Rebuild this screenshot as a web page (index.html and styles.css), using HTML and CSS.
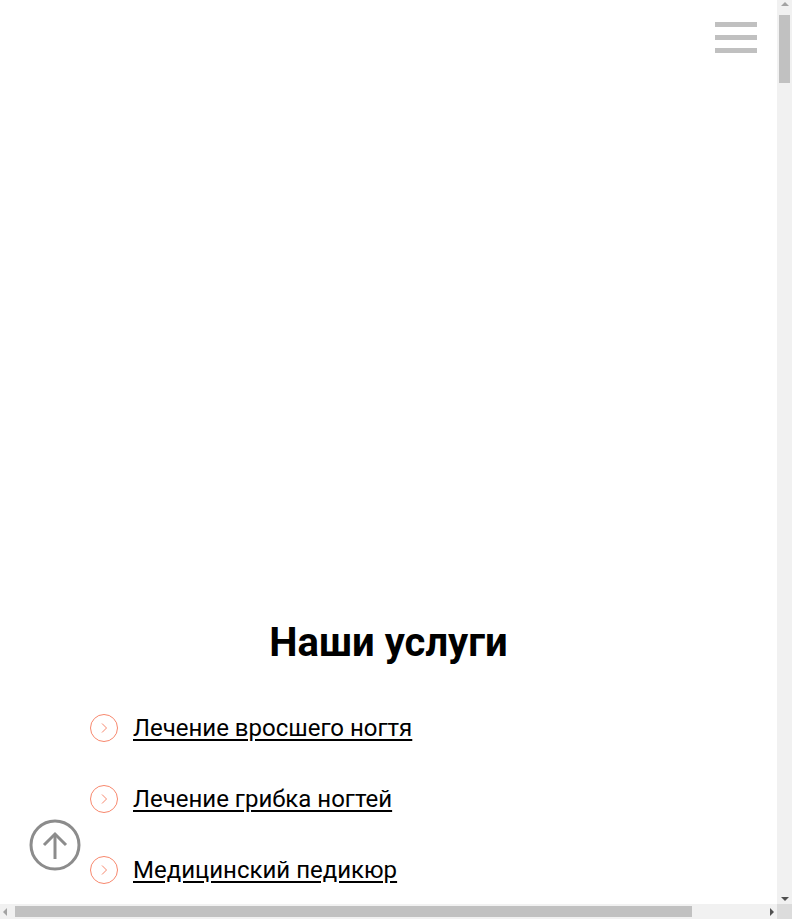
FILE: index.html
```html
<!DOCTYPE html>
<html lang="ru">

<head>
    <meta charset="utf-8">
    <title>Наши услуги</title>

    <link rel="stylesheet" href="styles.css">

</head>

<body>

    <div class="page">

        <header class="header">
            <button class="burger" aria-label="Меню">
                <span></span>
                <span></span>
                <span></span>
            </button>
        </header>

        <section class="hero"></section>

        <section class="services">
            <h2 class="title">Наши услуги</h2>

            <ul class="services-list">
                <li class="service">
                    <svg class="service-icon" width="28" height="28" viewBox="0 0 28 28">
                        <circle cx="14" cy="14" r="13.5" />
                        <polyline points="12,9.5 16.5,14 12,18.5" />
                    </svg>
                    <a href="#">Лечение вросшего ногтя</a>
                </li>
                <li class="service">
                    <svg class="service-icon" width="28" height="28" viewBox="0 0 28 28">
                        <circle cx="14" cy="14" r="13.5" />
                        <polyline points="12,9.5 16.5,14 12,18.5" />
                    </svg>
                    <a href="#">Лечение грибка ногтей</a>
                </li>
                <li class="service">
                    <svg class="service-icon" width="28" height="28" viewBox="0 0 28 28">
                        <circle cx="14" cy="14" r="13.5" />
                        <polyline points="12,9.5 16.5,14 12,18.5" />
                    </svg>
                    <a href="#">Медицинский педикюр</a>
                </li>
            </ul>
        </section>

    </div>

    <a href="#" class="to-top" aria-label="Наверх">
        <svg width="52" height="52" viewBox="0 0 52 52">
            <circle cx="26" cy="26" r="24" />
            <line x1="26" y1="15" x2="26" y2="40" />
            <polyline points="15,26 26,15 37,26" />
        </svg>
    </a>

    <!-- полосы прокрутки окна -->
    <div class="scroll-v">
        <span class="arrow arrow-up"></span>
        <span class="thumb"></span>
        <span class="arrow arrow-down"></span>
    </div>
    <div class="scroll-h">
        <span class="arrow arrow-left"></span>
        <span class="thumb"></span>
        <span class="arrow arrow-right"></span>
    </div>
    <div class="scroll-corner"></div>

</body>

</html>
```

FILE: styles.css
```css
* {
    padding: 0;
    margin: 0;
    box-sizing: border-box;
}

body {
    font-family: Roboto, "Liberation Sans", sans-serif;
    color: #000;
    background: #fff;
}

.page {
    min-height: 11619px;
    margin-right: 15px;
}

.header {
    display: flex;
    justify-content: flex-end;
    padding: 22px 20px 0 0;
}

.burger {
    display: flex;
    flex-direction: column;
    gap: 8px;
    width: 42px;
    border: none;
    background: none;
    cursor: pointer;
}

.burger span {
    display: block;
    height: 5px;
    background: #c0c0c0;
}

.hero {
    height: 566px;
}

.title {
    font-size: 40px;
    font-weight: 700;
    text-align: center;
    line-height: 48px;
    margin-bottom: 45px;
}

.services-list {
    list-style: none;
    padding-left: 90px;
}

.service {
    display: flex;
    align-items: flex-start;
    gap: 15px;
    height: 43px;
    margin-bottom: 28px;
}

.service a {
    color: #000;
    font-size: 24px;
    line-height: 32px;
    text-decoration: underline;
    text-underline-offset: 3px;
}

.service-icon {
    flex-shrink: 0;
    margin-top: 2px;
    fill: none;
    stroke: #f7876d;
    stroke-width: 1;
}

.to-top {
    position: fixed;
    left: 29px;
    bottom: 48px;
    display: block;
    width: 52px;
    height: 52px;
}

.to-top svg {
    fill: none;
    stroke: #8c8c8c;
    stroke-width: 3;
}

/* scrollbars */
.scroll-v,
.scroll-h {
    position: fixed;
    display: flex;
    align-items: center;
    background: #f1f1f1;
}

.scroll-v {
    top: 0;
    right: 0;
    bottom: 15px;
    width: 15px;
    flex-direction: column;
}

.scroll-h {
    left: 0;
    bottom: 0;
    right: 15px;
    height: 15px;
}

.scroll-corner {
    position: fixed;
    right: 0;
    bottom: 0;
    width: 15px;
    height: 15px;
    background: #dcdcdc;
}

.thumb {
    background: #c1c1c1;
}

.scroll-v .thumb {
    width: 11px;
    height: 68px;
    margin-top: 9px;
}

.scroll-h .thumb {
    height: 11px;
    width: 677px;
    margin-left: 8px;
}

.arrow {
    width: 0;
    height: 0;
    border: 4px solid transparent;
}

.arrow-up {
    margin-top: 2px;
    border-top: none;
    border-bottom-color: #a3a3a3;
}

.arrow-down {
    margin-top: auto;
    margin-bottom: 3px;
    border-bottom: none;
    border-top-color: #505050;
}

.arrow-left {
    margin-left: 3px;
    border-left: none;
    border-right-color: #a3a3a3;
}

.arrow-right {
    margin-left: auto;
    margin-right: 3px;
    border-right: none;
    border-left-color: #505050;
}
```
